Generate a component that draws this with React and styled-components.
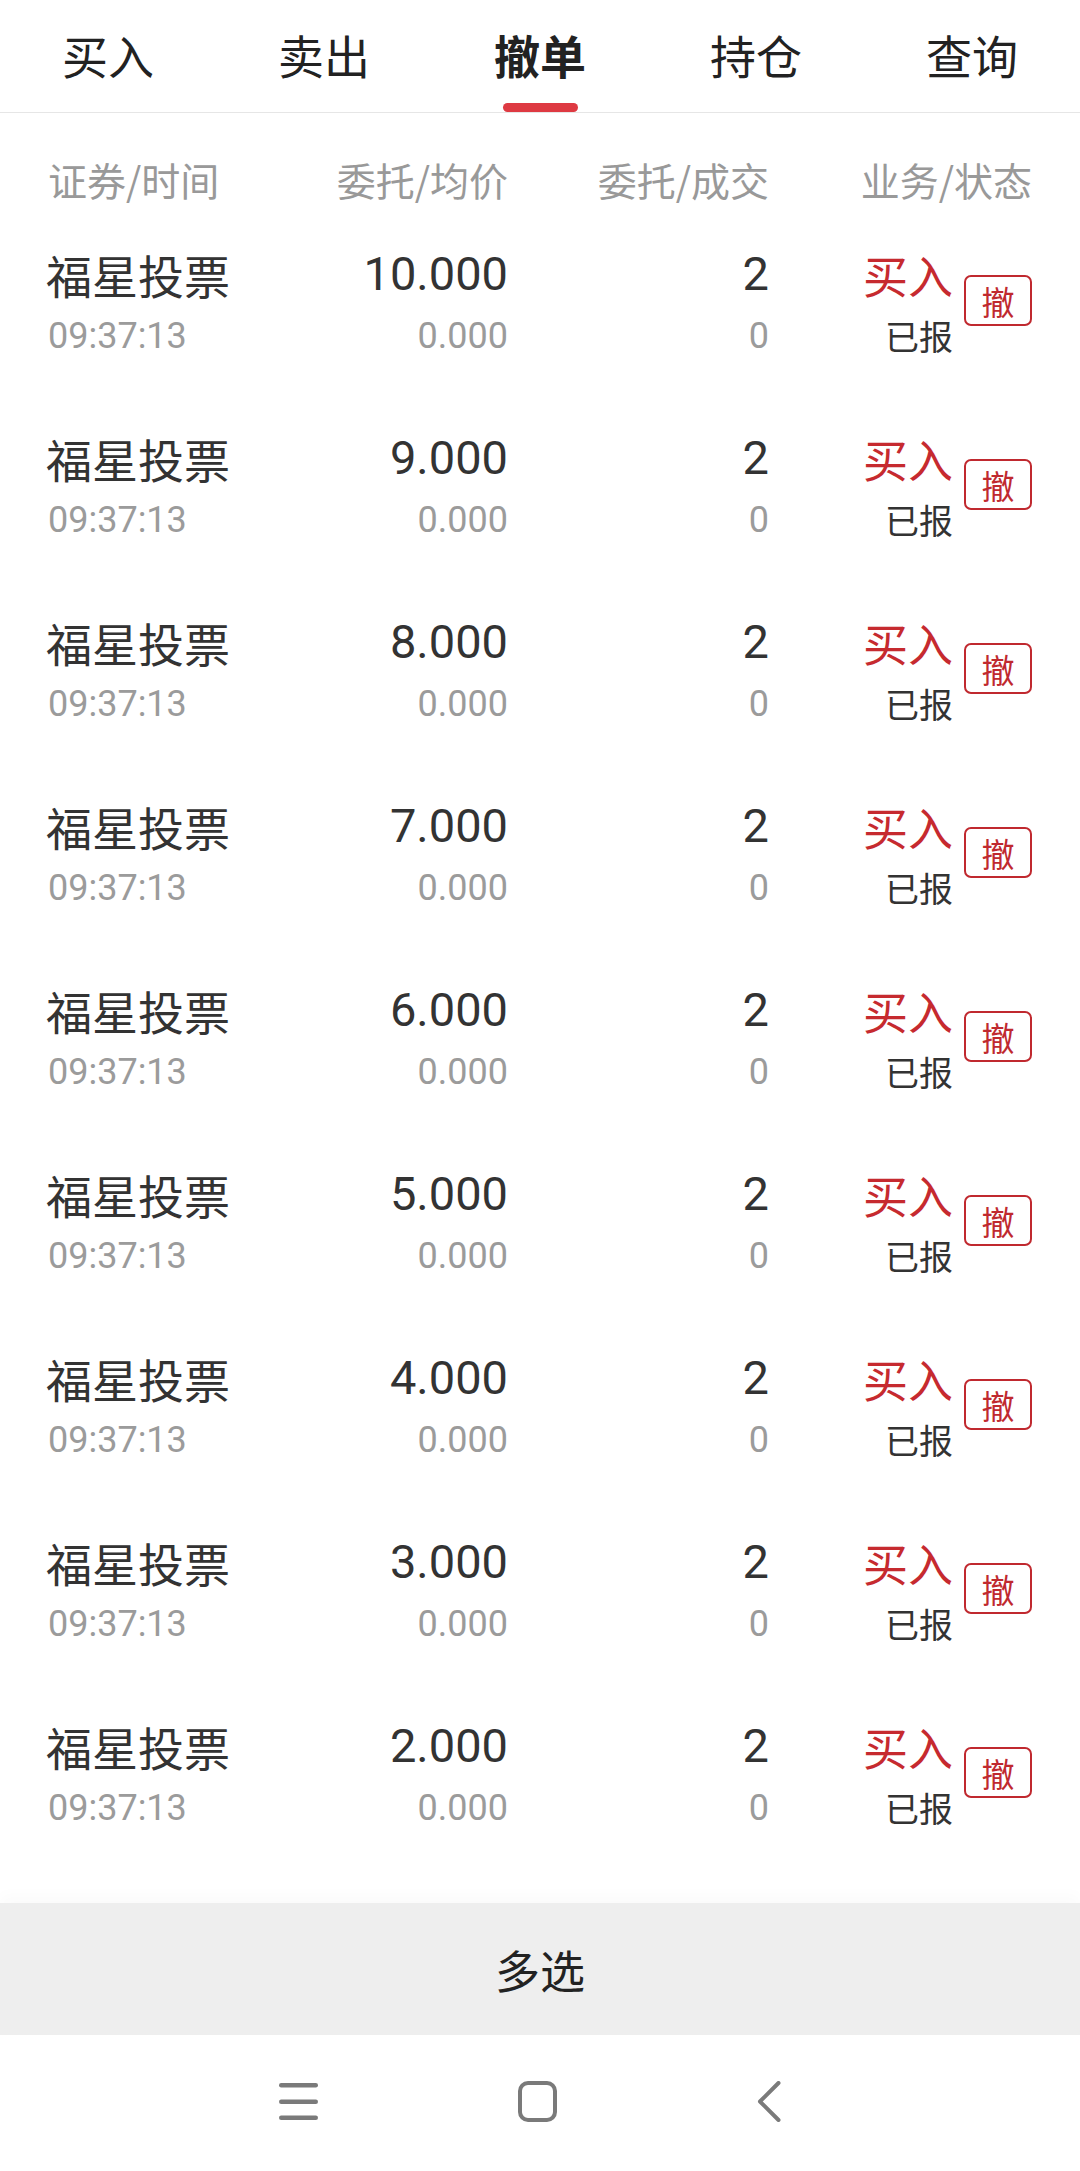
import React from "react";
import styled, { createGlobalStyle } from "styled-components";

const GlobalStyle = createGlobalStyle`
  html, body { margin: 0; padding: 0; background: #ffffff; }
  body { font-family: "Noto Sans CJK SC", "Noto Sans", sans-serif; }
  * { box-sizing: border-box; }
`;

const CJK = `"Noto Sans CJK SC", "Noto Sans", sans-serif`;
const NUM = `Roboto, "Noto Sans CJK SC", sans-serif`;

const Page = styled.div`
  width: 1080px;
  height: 2171px;
  display: flex;
  flex-direction: column;
  overflow: hidden;
  background: #fff;
`;

const Tabs = styled.nav`
  height: 113px;
  flex: none;
  display: grid;
  grid-template-columns: repeat(5, 1fr);
  border-bottom: 1px solid #e6e6e6;
`;

const Tab = styled.div`
  display: flex;
  flex-direction: column;
  align-items: center;
  padding-top: 31px;
  font-family: ${CJK};
  font-size: 46px;
  line-height: 46px;
  color: #222;
  font-weight: ${(p) => (p.$active ? 700 : 400)};
`;

const Indicator = styled.span`
  margin-top: auto;
  width: 75px;
  height: 9px;
  border-radius: 5px;
  background: ${(p) => (p.$show ? "#de3a42" : "transparent")};
`;

const Grid = styled.div`
  display: grid;
  grid-template-columns: 230px 230px 261px 263px;
  padding: 0 48px;
`;

const HeaderRow = styled(Grid)`
  flex: none;
  padding-top: 40px;
  padding-bottom: 19px;
`;

const HeadCell = styled.div`
  font-family: ${CJK};
  font-size: 39px;
  line-height: 52px;
  color: #999;
  text-align: ${(p) => (p.$left ? "left" : "right")};
`;

const List = styled.div`
  flex: 1;
  overflow: hidden;
`;

const Row = styled(Grid)`
  height: 184px;
  padding-top: 19px;
`;

const Cell = styled.div`
  display: flex;
  flex-direction: column;
  align-items: ${(p) => (p.$left ? "flex-start" : "flex-end")};
`;

const Primary = styled.div`
  height: 62px;
  line-height: 62px;
  font-family: ${(p) => (p.$num ? NUM : CJK)};
  font-size: ${(p) => (p.$num ? "47px" : "46px")};
  color: #333;
  margin-left: ${(p) => (p.$num ? "0" : "-2px")};
`;

const Secondary = styled.div`
  height: 60px;
  line-height: 60px;
  font-family: ${NUM};
  font-size: 36px;
  color: #9b9b9b;
  margin-top: 1px;
`;

const ActionCell = styled.div`
  display: flex;
  align-items: center;
  justify-content: flex-end;
  gap: 11px;
  height: 123px;
`;

const StatusStack = styled.div`
  display: flex;
  flex-direction: column;
  align-items: flex-end;
`;

const Side = styled.div`
  height: 62px;
  line-height: 62px;
  font-family: ${CJK};
  font-size: 45px;
  color: #c62a2f;
`;

const Status = styled.div`
  height: 60px;
  line-height: 60px;
  font-family: ${CJK};
  font-size: 34px;
  color: #333;
`;

const CancelBtn = styled.button`
  width: 68px;
  height: 51px;
  margin-bottom: 8px;
  padding: 0;
  border: 2.5px solid #c0292f;
  border-radius: 7px;
  background: #fff;
  color: #c0292f;
  font-family: ${CJK};
  font-size: 33px;
  line-height: 44px;
  display: flex;
  align-items: center;
  justify-content: center;
`;

const MultiBar = styled.div`
  flex: none;
  height: 132px;
  background: #eeeeee;
  display: flex;
  align-items: center;
  justify-content: center;
  font-family: ${CJK};
  font-size: 45px;
  color: #222;
  box-shadow: 0 -8px 14px rgba(0, 0, 0, 0.018);
`;

const NavBar = styled.div`
  flex: none;
  height: 136px;
  display: flex;
  align-items: center;
  justify-content: center;
  gap: 200px;
  padding-right: 20px;
  padding-bottom: 4px;
  background: #fff;
`;

const MenuIcon = () => (
  <svg width="39" height="37" viewBox="0 0 39 37">
    <rect x="0" y="0" width="39" height="4.5" rx="2.2" fill="#7a7a7a" />
    <rect x="0" y="16.5" width="39" height="4.5" rx="2.2" fill="#7a7a7a" />
    <rect x="0" y="32.5" width="39" height="4.5" rx="2.2" fill="#7a7a7a" />
  </svg>
);

const HomeIcon = () => (
  <svg width="39" height="41" viewBox="0 0 39 41">
    <rect x="2" y="2" width="35" height="37" rx="8" fill="none" stroke="#7a7a7a" strokeWidth="4" />
  </svg>
);

const BackIcon = () => (
  <svg width="24" height="41" viewBox="0 0 24 41">
    <polyline points="21.5,2 3,20.5 21.5,39" fill="none" stroke="#7a7a7a" strokeWidth="4" strokeLinecap="round" strokeLinejoin="round" />
  </svg>
);

const tabs = ["买入", "卖出", "撤单", "持仓", "查询"];
const prices = ["10.000", "9.000", "8.000", "7.000", "6.000", "5.000", "4.000", "3.000", "2.000"];

export default function App() {
  return (
    <Page>
      <GlobalStyle />
      <Tabs>
        {tabs.map((t) => (
          <Tab key={t} $active={t === "撤单"}>
            {t}
            <Indicator $show={t === "撤单"} />
          </Tab>
        ))}
      </Tabs>
      <HeaderRow>
        <HeadCell $left>证券/时间</HeadCell>
        <HeadCell>委托/均价</HeadCell>
        <HeadCell>委托/成交</HeadCell>
        <HeadCell>业务/状态</HeadCell>
      </HeaderRow>
      <List>
        {prices.map((p) => (
          <Row key={p}>
            <Cell $left>
              <Primary>福星投票</Primary>
              <Secondary>09:37:13</Secondary>
            </Cell>
            <Cell>
              <Primary $num>{p}</Primary>
              <Secondary>0.000</Secondary>
            </Cell>
            <Cell>
              <Primary $num>2</Primary>
              <Secondary>0</Secondary>
            </Cell>
            <ActionCell>
              <StatusStack>
                <Side>买入</Side>
                <Status>已报</Status>
              </StatusStack>
              <CancelBtn>撤</CancelBtn>
            </ActionCell>
          </Row>
        ))}
      </List>
      <MultiBar>多选</MultiBar>
      <NavBar>
        <MenuIcon />
        <HomeIcon />
        <BackIcon />
      </NavBar>
    </Page>
  );
}
